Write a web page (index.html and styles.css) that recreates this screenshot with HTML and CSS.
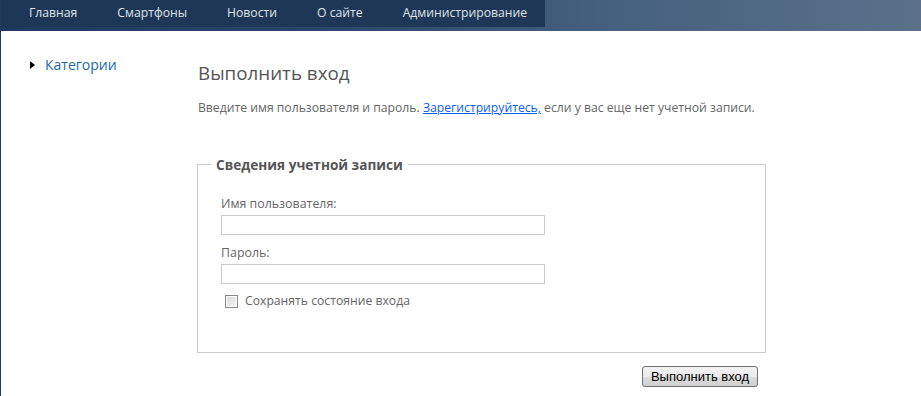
FILE: index.html
```html
<!DOCTYPE html>
<html lang="ru">
<head>
<meta charset="utf-8">
<title>Выполнить вход</title>
<link rel="stylesheet" href="styles.css">
</head>
<body>
<div class="page">
  <header class="header">
    <ul class="menu">
      <li><a href="#">Главная</a></li>
      <li><a href="#">Смартфоны</a></li>
      <li><a href="#">Новости</a></li>
      <li><a href="#">О сайте</a></li>
      <li><a href="#">Администрирование</a></li>
    </ul>
  </header>
  <div class="body">
    <aside class="sidebar">
      <div class="cat"><span class="tri"></span><a href="#">Категории</a></div>
    </aside>
    <main class="content">
      <h2 class="title">Выполнить вход</h2>
      <p class="intro">Введите имя пользователя и пароль. <a href="#">Зарегистрируйтесь,</a> если у вас еще нет учетной записи.</p>
      <fieldset class="account">
        <legend>Сведения учетной записи</legend>
        <label class="lbl">Имя пользователя:</label>
        <input class="txt" type="text">
        <label class="lbl">Пароль:</label>
        <input class="txt" type="password">
        <label class="remember"><span class="cb"></span>Сохранять состояние входа</label>
      </fieldset>
      <div class="actions"><button class="btn" type="button">Выполнить вход</button></div>
    </main>
  </div>
</div>
</body>
</html>
```
FILE: styles.css
```css
html, body {
  margin: 0;
  padding: 0;
  background: #fff;
}
body {
  font-family: "Open Sans", "Noto Sans", sans-serif;
  color: #666;
}
.page {
  border-left: 1px solid #1f3a5a;
  min-height: 396px;
  box-sizing: border-box;
}
.header {
  height: 31px;
  background: linear-gradient(to right, #1f3a5a 0%, #2a4767 35%, #45607e 65%, #5a7189 100%);
}
.menu {
  display: flex;
  margin: 0;
  padding: 0 0 0 8px;
  list-style: none;
  width: 544px;
  height: 27px;
  box-sizing: border-box;
  background: #1e3756;
}
.menu li a {
  display: block;
  padding: 0 20px;
  white-space: nowrap;
  line-height: 26px;
  font-size: 12.2px;
  color: #dfe3e8;
  text-decoration: none;
}
.body {
  display: flex;
}
.sidebar {
  width: 196px;
  padding: 24px 0 0 29px;
  box-sizing: border-box;
}
.cat {
  display: flex;
  align-items: center;
  font-size: 14px;
}
.tri {
  width: 0;
  height: 0;
  border-top: 4px solid transparent;
  border-bottom: 4px solid transparent;
  border-left: 5px solid #000;
  margin-right: 10px;
}
.cat a {
  color: #1b6aa5;
  text-decoration: none;
}
.content {
  width: 569px;
  padding-top: 30px;
}
.title {
  margin: 0 0 0 1px;
  font-size: 18.8px;
  font-weight: normal;
  color: #555;
  line-height: 24px;
}
.intro {
  margin: 14px 0 0 1px;
  font-size: 12.2px;
  line-height: 18px;
  color: #666;
}
.intro a {
  color: #0a5ff5;
  text-decoration: underline;
}
.account {
  margin: 38px 0 0;
  padding: 22px 23px 43px;
  border: 1px solid #ccc;
  display: flex;
  flex-direction: column;
  align-items: flex-start;
}
.account legend {
  margin-left: -10px;
  padding: 0 5px;
  font-size: 13.6px;
  font-weight: bold;
  color: #555;
}
.lbl {
  font-size: 12.4px;
  line-height: 16px;
  color: #666;
}
.txt {
  width: 324px;
  height: 20px;
  box-sizing: border-box;
  margin: 3px 0 10px;
  border: 1px solid #ccc;
  padding: 0 2px;
}
.remember {
  display: flex;
  align-items: center;
  margin-left: 4px;
  margin-top: -1px;
  font-size: 12.2px;
  line-height: 16px;
  color: #666;
}
.cb {
  width: 11px;
  height: 11px;
  border: 1px solid #888;
  background: linear-gradient(135deg, #d8d8d8, #f6f6f6);
  box-shadow: inset 0 0 0 1px #fff;
  margin-right: 7px;
}
.actions {
  display: flex;
  justify-content: flex-end;
  padding: 13px 8px 0 0;
}
.btn {
  width: 116px;
  height: 21px;
  padding: 0;
  font-family: "Liberation Sans", Arial, sans-serif;
  font-size: 13px;
  color: #000;
  border: 1px solid #707070;
  border-radius: 3px;
  background: linear-gradient(#f2f2f2 0%, #ebebeb 50%, #dddddd 51%, #cfcfcf 100%);
}
```
